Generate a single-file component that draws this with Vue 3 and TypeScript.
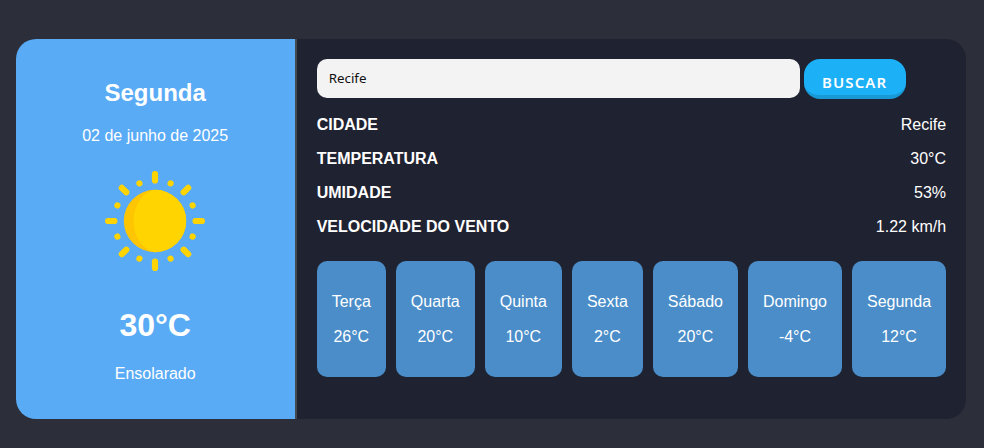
<script setup lang="ts">
import { ref } from 'vue'

interface Detail {
  label: string
  value: string
}

interface Forecast {
  day: string
  temperature: string
}

const city = ref('Recife')

const details: Detail[] = [
  { label: 'CIDADE', value: 'Recife' },
  { label: 'TEMPERATURA', value: '30°C' },
  { label: 'UMIDADE', value: '53%' },
  { label: 'VELOCIDADE DO VENTO', value: '1.22 km/h' },
]

const forecast: Forecast[] = [
  { day: 'Terça', temperature: '26°C' },
  { day: 'Quarta', temperature: '20°C' },
  { day: 'Quinta', temperature: '10°C' },
  { day: 'Sexta', temperature: '2°C' },
  { day: 'Sábado', temperature: '20°C' },
  { day: 'Domingo', temperature: '-4°C' },
  { day: 'Segunda', temperature: '12°C' },
]

const rayAngles = [0, 45, 90, 135, 180, 225, 270, 315]
const dotAngles = [22.5, 67.5, 112.5, 157.5, 202.5, 247.5, 292.5, 337.5]
</script>

<template>
  <main class="page">
    <div class="weather">
      <section class="today">
        <h2 class="weekday">Segunda</h2>
        <p class="date">02 de junho de 2025</p>
        <svg class="sun" viewBox="0 0 100 100" aria-hidden="true">
          <g fill="#ffd400">
            <rect
              v-for="angle in rayAngles"
              :key="angle"
              x="46.9"
              y="0"
              width="6.2"
              height="12.5"
              rx="3.1"
              :transform="`rotate(${angle} 50 50)`"
            />
            <circle
              v-for="angle in dotAngles"
              :key="angle"
              cx="50"
              cy="9.3"
              r="3.1"
              :transform="`rotate(${angle} 50 50)`"
            />
          </g>
          <circle cx="50" cy="50" r="31.2" fill="#fdc502" />
          <path d="M50 18.8A31.2 31.2 0 0 1 50 81.2C38 79.5 28.6 65.5 28.6 50S38 20.5 50 18.8Z" fill="#ffd400" />
        </svg>
        <h1 class="temperature">{{ details[1].value }}</h1>
        <p class="condition">Ensolarado</p>
      </section>

      <section class="info">
        <form class="search" @submit.prevent>
          <input v-model="city" class="search-input" type="text" aria-label="Cidade" />
          <button class="search-button" type="submit">BUSCAR</button>
        </form>
        <dl class="details">
          <div v-for="item in details" :key="item.label" class="detail">
            <dt>{{ item.label }}</dt>
            <dd>{{ item.value }}</dd>
          </div>
        </dl>
        <ul class="forecast">
          <li v-for="item in forecast" :key="item.day" class="day">
            <span>{{ item.day }}</span>
            <span>{{ item.temperature }}</span>
          </li>
        </ul>
      </section>
    </div>
  </main>
</template>

<style>
body {
  margin: 0;
  background: #2c2f3a;
}
</style>

<style scoped>
.page {
  box-sizing: border-box;
  height: 448px;
  padding: 39px 18.3px 29px 15.7px;
  background: #2c2f3a;
  color: #fff;
  font: 16px/18px "Liberation Sans", Arial, sans-serif;
}

.weather {
  display: flex;
  height: 380px;
  overflow: hidden;
  border-radius: 20px;
  background: #1f2230;
}

.today {
  box-sizing: border-box;
  display: flex;
  flex: 0 0 281px;
  flex-direction: column;
  align-items: center;
  padding-top: 40px;
  border-right: 2px solid #444950;
  background: #5aabf5;
}

.weekday {
  margin: 0;
  font-size: 24px;
  line-height: 28px;
}

.date {
  margin: 20px 0 0;
}

.sun {
  width: 100px;
  height: 100px;
  margin-top: 26px;
}

.temperature {
  margin: 36px 0 0;
  font-size: 32px;
  line-height: 36px;
}

.condition {
  margin: 22px 0 0;
}

.info {
  flex: 1;
  padding: 20px;
}

.search {
  display: flex;
  gap: 4px;
  height: 40px;
}

.search-input {
  box-sizing: border-box;
  width: 483px;
  height: 39px;
  padding: 0 12px 2px;
  border: 0;
  border-radius: 10px;
  outline: 0;
  background: #f3f3f3;
  color: #111;
  font: 13.333px "Noto Sans", sans-serif;
}

.search-button {
  box-sizing: border-box;
  width: 102px;
  height: 40px;
  padding: 10px 0 0;
  border: 0;
  border-bottom: 4px solid #1899d6;
  border-radius: 16px;
  background: #1cb0f6;
  color: #fff;
  font: 600 15px/20px "Noto Sans", sans-serif;
  letter-spacing: 1.1px;
}

.details {
  display: flex;
  flex-direction: column;
  gap: 16px;
  margin: 17px 0 0;
}

.detail {
  display: flex;
  justify-content: space-between;
}

.detail dt {
  font-weight: 700;
}

.detail dd {
  margin: 0;
}

.forecast {
  display: flex;
  gap: 10px;
  margin: 25px 0 0;
  padding: 0;
  list-style: none;
}

.day {
  box-sizing: border-box;
  display: flex;
  flex: 1 0 auto;
  flex-direction: column;
  align-items: center;
  gap: 17px;
  height: 116px;
  padding: 32px 15px 0;
  border-radius: 10px;
  background: #4a8dc8;
}
</style>
